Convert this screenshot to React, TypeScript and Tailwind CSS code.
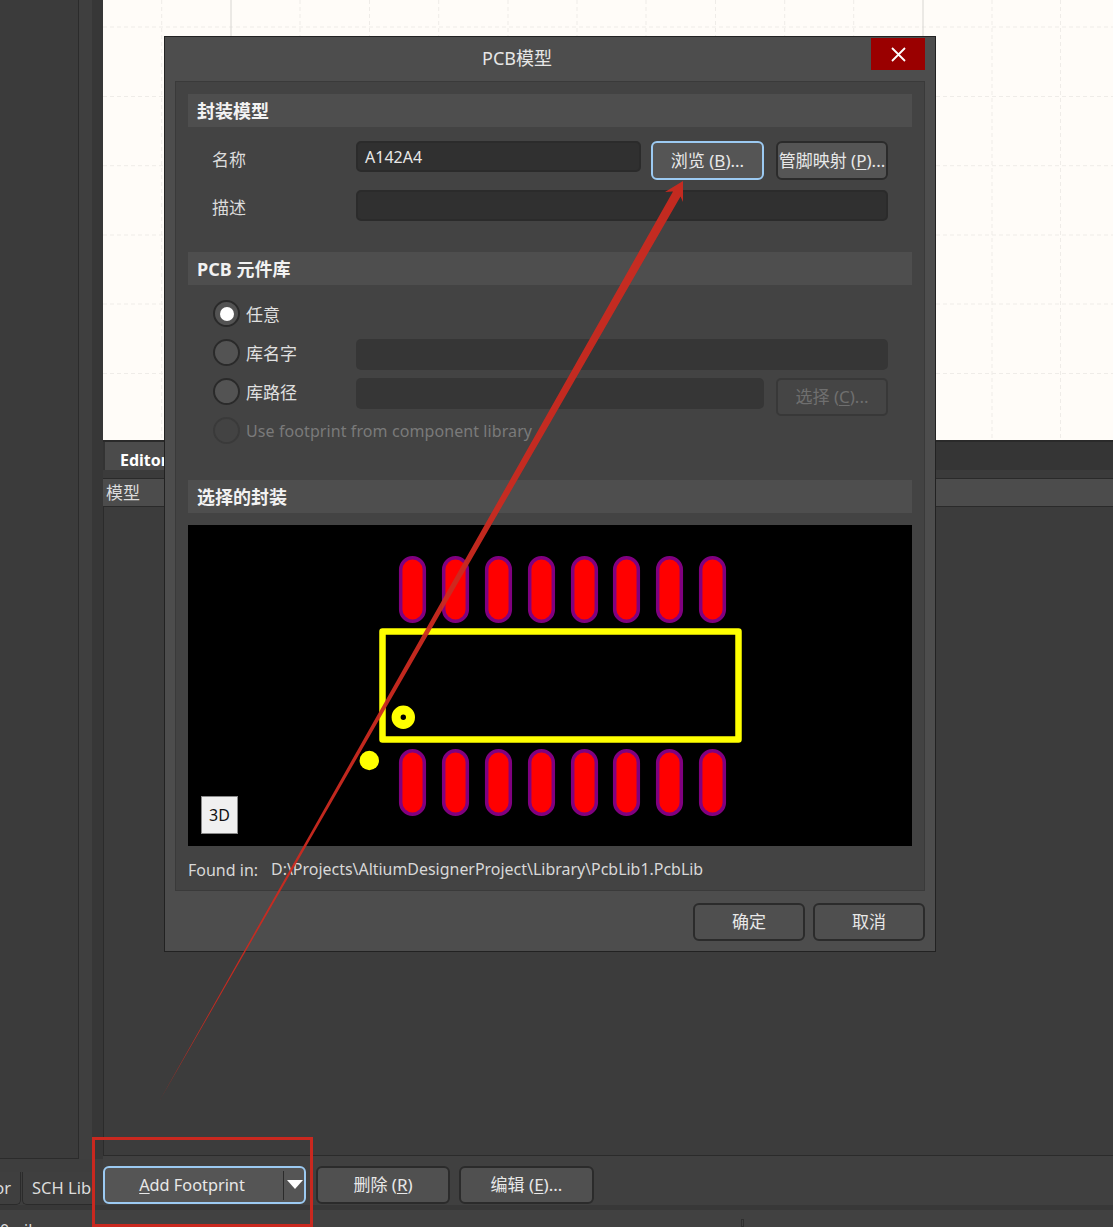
const FONT = "font-['Noto_Sans','Noto_Sans_CJK_SC',sans-serif]";

const PAD_X = [412.5, 455.5, 498.5, 541.5, 584.5, 626.5, 669.5, 712.5];
const GRID_X = [161.7, 231, 300, 369.5, 438.7, 508, 577, 646, 715.5, 784.7, 853.7, 923, 992, 1060.5];
const GRID_Y = [27, 96.5, 165.7, 235, 304, 373.5];

function Accel({ before, letter, after }: { before: string; letter: string; after: string }) {
  return (
    <span className="whitespace-nowrap">
      {before}
      <span className="underline underline-offset-2">{letter}</span>
      {after}
    </span>
  );
}

function SectionHeader({ title }: { title: string }) {
  return (
    <div className="h-[33px] flex items-center pl-[9px] bg-[#4e4e4e] text-[18px] font-bold text-[#f2f2f2] leading-none">
      {title}
    </div>
  );
}

function Radio({ checked, disabled }: { checked?: boolean; disabled?: boolean }) {
  return (
    <span
      className={
        disabled
          ? "w-[27px] h-[27px] shrink-0 rounded-full border-2 border-[#3a3a3a] bg-[#434343]"
          : "w-[27px] h-[27px] shrink-0 rounded-full border-2 border-[#2a2a2a] bg-[#535353] flex items-center justify-center"
      }
    >
      {checked && <span className="w-[14px] h-[14px] rounded-full bg-white" />}
    </span>
  );
}

function Field({ className, children }: { className: string; children?: React.ReactNode }) {
  return (
    <div className={`h-[31px] rounded-[5px] border-2 border-[#2b2b2b] bg-[#303030] flex items-center pl-[7px] text-[16px] text-[#e8e8e8] leading-none ${className}`}>
      {children}
    </div>
  );
}

function DisabledField({ className }: { className: string }) {
  return <div className={`h-[31px] mt-[3px] rounded-[5px] bg-[#363636] ${className}`} />;
}

function Pcb() {
  return (
    <svg className="block" width="724" height="321" viewBox="188 525 724 321">
      {PAD_X.map((x) => (
        <g key={x}>
          <rect x={x - 11.8} y={557.7} width="23.6" height="63.6" rx="11.8" fill="#ff0000" stroke="#800080" strokeWidth="3.5" />
          <rect x={x - 11.8} y={750.7} width="23.6" height="63.6" rx="11.8" fill="#ff0000" stroke="#800080" strokeWidth="3.5" />
        </g>
      ))}
      <rect x="382.5" y="631.5" width="356" height="108" fill="none" stroke="#ffff00" strokeWidth="6.5" strokeLinejoin="round" />
      <circle cx="403.3" cy="717.3" r="7.2" fill="none" stroke="#ffff00" strokeWidth="9" />
      <circle cx="369.3" cy="760.5" r="9.7" fill="#ffff00" />
    </svg>
  );
}

function PcbModelDialog() {
  return (
    <div className={`absolute left-[164px] top-[36px] w-[772px] h-[916px] border border-[#222222] bg-[#4d4d4d] flex flex-col ${FONT}`}>
      <div className="h-[44px] shrink-0 flex items-center justify-center pr-[66px] pb-[2px] text-[18px] text-[#e6e6e6] leading-none">PCB模型</div>
      <button className="absolute left-[706px] top-[1px] w-[54px] h-[32px] pl-[1px] bg-[#9a0000] flex items-center justify-center">
        <svg width="15" height="15" viewBox="0 0 15 15">
          <path d="M1 1 L14 14 M14 1 L1 14" stroke="#ffffff" strokeWidth="1.8" fill="none" />
        </svg>
      </button>

      <div className="mx-[10px] h-[810px] shrink-0 border border-[#3a3a3a] bg-[#434343] px-[12px] pt-[12px] flex flex-col">
        <SectionHeader title="封装模型" />
        <div className="mt-[14px] h-[39px] pl-[24px] flex items-center text-[17px] text-[#dcdcdc]">
          <span className="w-[144px] shrink-0 -mt-[2px]">名称</span>
          <Field className="w-[285px] -mt-[8px]">A142A4</Field>
          <button className="ml-[10px] w-[113px] h-[39px] rounded-[6px] border-2 border-[#9ccaf2] bg-[#555555] text-[17px] text-[#e8e8e8]">
            <Accel before="浏览 (" letter="B" after=")..." />
          </button>
          <button className="ml-[12px] w-[112px] h-[39px] rounded-[6px] border-2 border-[#2b2b2b] bg-[#555555] text-[17px] text-[#e8e8e8]">
            <Accel before="管脚映射 (" letter="P" after=")..." />
          </button>
        </div>
        <div className="mt-[10px] h-[31px] pl-[24px] pr-[24px] flex items-center text-[17px] text-[#dcdcdc]">
          <span className="w-[144px] shrink-0 mt-[4px]">描述</span>
          <Field className="flex-1" />
        </div>

        <div className="mt-[31px]">
          <SectionHeader title="PCB 元件库" />
        </div>
        <div className="mt-[9px] flex flex-col text-[17px] text-[#e0e0e0]">
          <div className="h-[39px] pl-[25px] flex items-center">
            <Radio checked />
            <span className="ml-[6px] mt-[2px]">任意</span>
          </div>
          <div className="h-[39px] pl-[25px] flex items-center">
            <Radio />
            <span className="ml-[6px] mt-[2px] w-[110px]">库名字</span>
            <DisabledField className="w-[532px]" />
          </div>
          <div className="h-[39px] pl-[25px] flex items-center">
            <Radio />
            <span className="ml-[6px] mt-[2px] w-[110px]">库路径</span>
            <DisabledField className="w-[408px]" />
            <button className="ml-[12px] w-[112px] h-[38px] mt-[10px] rounded-[5px] border-2 border-[#383838] bg-[#454545] text-[17px] text-[#6f6f6f]">
              <Accel before="选择 (" letter="C" after=")..." />
            </button>
          </div>
          <div className="h-[39px] pl-[25px] flex items-center">
            <Radio disabled />
            <span className="ml-[6px] text-[16px] tracking-[0.09px] text-[#7a7a7a] whitespace-nowrap">Use footprint from component library</span>
          </div>
        </div>

        <div className="mt-[30px]">
          <SectionHeader title="选择的封装" />
        </div>
        <div className="relative mt-[12px] h-[321px] bg-black">
          <Pcb />
          <div className="absolute left-[13px] top-[271px] w-[37px] h-[38px] bg-[#f0f0f0] border border-[#8a8a8a] flex items-center justify-center text-[16px] text-[#111111]">
            3D
          </div>
        </div>
        <div className="h-[44px] pt-[4px] flex items-center text-[16px] text-[#d8d8d8] whitespace-nowrap">
          <span className="w-[83px]">Found in:</span>
          <span className="text-[15.95px]">D:\Projects\AltiumDesignerProject\Library\PcbLib1.PcbLib</span>
        </div>
      </div>

      <div className="mt-[12px] pr-[10px] flex justify-end gap-[8px]">
        <button className="w-[112px] h-[38px] rounded-[6px] border-2 border-[#2b2b2b] bg-[#4f4f4f] text-[17px] text-[#e8e8e8]">确定</button>
        <button className="w-[112px] h-[38px] rounded-[6px] border-2 border-[#2b2b2b] bg-[#4f4f4f] text-[17px] text-[#e8e8e8]">取消</button>
      </div>
    </div>
  );
}

function Canvas() {
  return (
    <div className="h-[440px] bg-[#fffcf8] overflow-hidden">
      <svg className="block" width="1010" height="440" viewBox="103 0 1010 440">
        {GRID_Y.map((y) => (
          <line key={y} x1="103" x2="1113" y1={y} y2={y} stroke="#efece8" strokeDasharray="4 3" />
        ))}
        {GRID_X.map((x) => (
          <line
            key={x}
            x1={x}
            x2={x}
            y1="0"
            y2="440"
            stroke={x === 231 || x === 923 ? "#d8d6d2" : "#efece8"}
            strokeDasharray={x === 231 || x === 923 ? undefined : "4 3"}
          />
        ))}
      </svg>
    </div>
  );
}

export default function App() {
  return (
    <div className={`relative w-[1113px] h-[1227px] overflow-hidden bg-[#3e3e3e] flex flex-col ${FONT}`}>
      <div className="flex h-[1205px] shrink-0">
        <div className="w-[103px] shrink-0 flex flex-col">
          <div className="flex h-[1159px] shrink-0">
            <div className="w-[79px] border-r border-b border-[#2b2b2b] bg-[#3b3b3b]" />
            <div className="w-[13px] bg-[#3f3f3f]" />
            <div className="w-[11px] bg-[#373737]" />
          </div>
          <div className="mt-[13px] h-[33px] flex text-[16.5px] text-[#dcdcdc]">
            <div className="w-[21px] overflow-hidden border-r border-b border-[#2b2b2b] rounded-br-[5px] bg-[#3f3f3f] flex items-center justify-end pr-[9px]">or</div>
            <div className="ml-[1px] w-[70px] overflow-hidden border-l border-b border-[#2b2b2b] rounded-bl-[5px] bg-[#3f3f3f] flex items-center pl-[9px] whitespace-nowrap">SCH Lib</div>
          </div>
        </div>

        <div className="flex-1 flex flex-col min-w-0">
          <Canvas />
          <div className="h-[30px] shrink-0 border-t-2 border-[#2a2a2a] bg-[#353535] flex">
            <div className="w-[110px] border-l-2 border-[#333333] bg-[#4b4b4b] pl-[15px] pt-[8px] flex items-center text-[16px] font-bold text-white">Editor</div>
          </div>
          <div className="h-[8px] shrink-0 bg-[#3b3b3b]" />
          <div className="h-[29px] shrink-0 border-y border-[#2a2a2a] bg-[#4c4c4c] pl-[3px] flex items-center text-[17px] text-[#dcdcdc]">模型</div>
          <div className="h-[649px] shrink-0 border-l border-b border-[#2b2b2b] bg-[#3c3c3c]" />
          <div className="flex-1 bg-[#404040] flex items-start pt-[10px] text-[17px] text-[#e8e8e8]">
            <button className="relative w-[203px] h-[38px] rounded-[6px] border-2 border-[#9ccaf2] bg-[#555555] pr-[25px] text-[16.3px]">
              <Accel before="" letter="A" after="dd Footprint" />
              <span className="absolute left-[178px] top-[3px] w-px h-[29px] bg-[#2b2b2b]" />
              <svg className="absolute left-[181px] top-[12px]" width="18" height="10" viewBox="0 0 18 10">
                <path d="M1 0 H17 L9 9 Z" fill="#ffffff" />
              </svg>
            </button>
            <button className="ml-[10px] w-[134px] h-[38px] rounded-[6px] border-2 border-[#2b2b2b] bg-[#505050]">
              <Accel before="删除 (" letter="R" after=")" />
            </button>
            <button className="ml-[9px] w-[135px] h-[38px] rounded-[6px] border-2 border-[#2b2b2b] bg-[#505050]">
              <Accel before="编辑 (" letter="E" after=")..." />
            </button>
          </div>
        </div>
      </div>

      <div className="h-[5px] shrink-0 bg-[#383838]" />
      <div className="flex-1 flex overflow-hidden bg-[#414141] text-[16px] text-[#dcdcdc] leading-none">
        <div className="w-[741px] pt-[12px]">0mil</div>
        <div className="w-[3px] h-[8px] mt-[9px] border border-[#2f2f2f]" />
      </div>

      <PcbModelDialog />

      {/* annotation: arrow from the dropdown up to the browse button */}
      <svg className="absolute inset-0 pointer-events-none" width="1113" height="1227" viewBox="0 0 1113 1227">
        <path d="M160 1100 L673 191.5 L665 192 L683 181 L683 202 L680.5 196.5 Z" fill="#cb2a20" fillOpacity="0.95" />
      </svg>
      <div className="absolute left-[92px] top-[1137px] w-[221px] h-[90px] border-[3px] border-[#c9281f] pointer-events-none" />
    </div>
  );
}
